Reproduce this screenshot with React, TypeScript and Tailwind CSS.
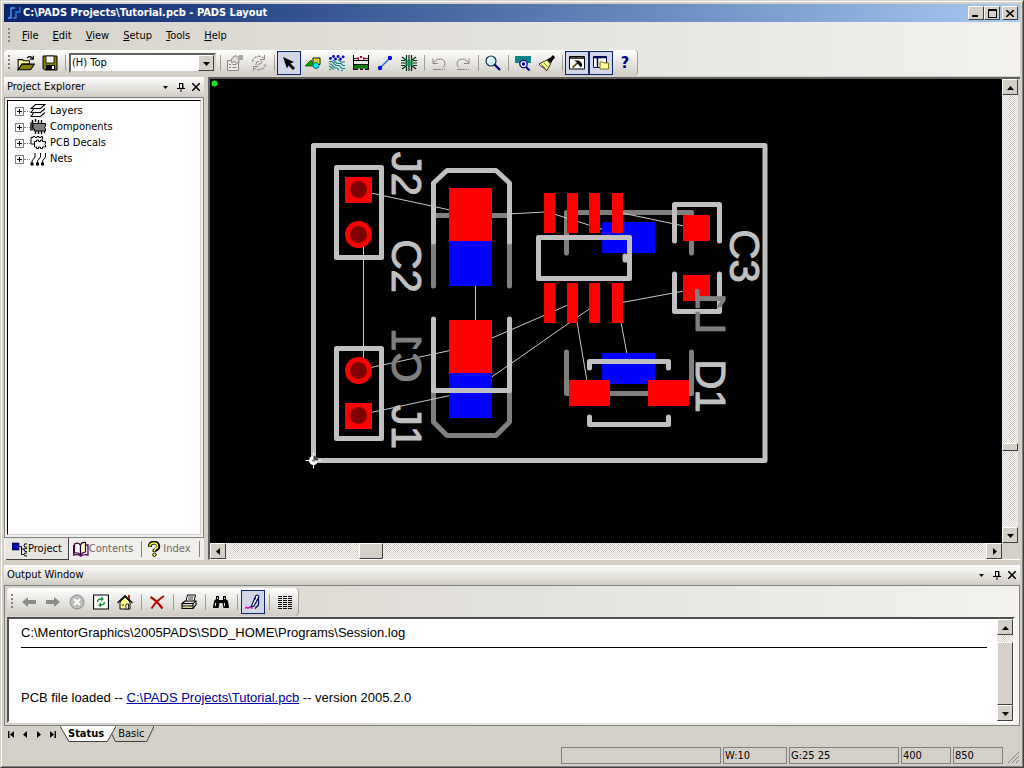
import { useState } from 'react';
import type { ReactNode } from 'react';

const raised = 'bg-[#d4d0c8] border border-t-white border-l-white border-r-[#404040] border-b-[#404040]';
const track = 'bg-[repeating-conic-gradient(#d4d0c8_0_25%,#fff_0_50%)] bg-[length:2px_2px]';
const strip = 'bg-linear-to-b from-white to-[#cfccc4]';

const Icon = ({ size = 16, children }: { size?: number; children: ReactNode }) => (
  <svg width={size} height={size} viewBox="0 0 16 16" fill="none" className="shrink-0" aria-hidden="true">
    {children}
  </svg>
);

const icons: Record<string, ReactNode> = {
  open: (
    <Icon size={18}>
      <path d="M1 14V5h4l1 1h5v3H4.500L1 14z" fill="#ffff9c" stroke="#000" strokeWidth="0.9" />
      <path d="M1 14l3.500-5H15.500L12 14z" fill="#848200" stroke="#000" strokeWidth="0.9" />
      <path d="M9 3.500q2.500-2.500 5 .5M14.500 1.500v3h-3" stroke="#000" />
    </Icon>
  ),
  save: (
    <Icon>
      <path d="M1 1h14v14H2.500L1 13.500z" fill="#848200" stroke="#000" />
      <path d="M4 1h8v7H4z" fill="#f4f4f4" stroke="#000" strokeWidth="0.8" />
      <path d="M4 10h9v5H4z" fill="#000" />
      <path d="M10 11h2v3h-2z" fill="#fff" />
    </Icon>
  ),
  props: (
    <Icon>
      <path d="M.5 5.500h11v10H.5z" fill="#eceae6" stroke="#8c8984" />
      <path d="M2 9.500h2M5.500 9.500h4M2 12.500h2M5.500 12.500h4" stroke="#8c8984" />
      <path d="M4 5l3-4h3l2 1.500V8H9L7 6.500 5 8z" fill="#dcdad4" stroke="#8c8984" />
      <path d="M12 0h4v5h-4z" fill="#a8a59f" />
    </Icon>
  ),
  cycle: (
    <Icon>
      <path d="M1.500 7a6.500 6 0 0 1 11-4M14.500 9a6.500 6 0 0 1-11 4" stroke="#9c9994" strokeWidth="1.400" strokeDasharray="3 1" />
      <path d="M13.500 0v4.500H9M2.500 16v-4.500H7M11 5.500l-1 3-3 1M5 10l.5-3 3-1" stroke="#8c8984" />
    </Icon>
  ),
  pointer: (
    <Icon>
      <path d="M2 2l11 5-3.500 1.500L14 13l-2 2-4.500-4.500L6 13.500z" fill="#000" />
    </Icon>
  ),
  draw: (
    <Icon>
      <path d="M8 3h7v6.500H8z" fill="#ffff00" stroke="#000" />
      <path d="M10 5h3v2h-3z" fill="#fff" stroke="#806000" strokeWidth="0.6" />
      <path d="M0 11l6-6 3 6z" fill="#00a000" stroke="#005000" strokeWidth="0.8" />
      <circle cx="11" cy="10.500" r="3" fill="#00dede" stroke="#006070" strokeWidth="0.8" />
    </Icon>
  ),
  route: (
    <Icon>
      <path
        d="M0 6.500h3l4 4h3l3 3h3M0 9h2l4 4h2l2 2M0 11.500h1.500l3 3M4 5l4 3.500h4l2 2h2M9 4.500L12 7h4M0 14.500h2M12 15.500h2"
        stroke="#108494"
        strokeWidth="1.200"
      />
      <g fill="#0000c0">
        <circle cx="1.500" cy="3.500" r="1.400" />
        <circle cx="4.500" cy="1.500" r="1.400" />
        <circle cx="6.500" cy="4" r="1.400" />
        <circle cx="9" cy="1.500" r="1.400" />
        <circle cx="11.500" cy="4" r="1.400" />
        <circle cx="14.200" cy="1.800" r="1.400" />
      </g>
    </Icon>
  ),
  section: (
    <Icon>
      <path d="M.5 0v15M15.500 0v15M0 5.500h16M0 9.500h16" stroke="#000" />
      <path d="M1 10h14v3.500H1z" fill="#008000" />
      <path d="M0 13.500h5V15H0zM7 13.500h3V15H7zM12 13.500h4V15h-4z" fill="#000" />
      <path d="M3 3.500l3-1.500v3zM13 3.500L10 2v3zM7 1h2v2H7z" fill="#b00020" />
      <path d="M1 3.500h3M12 3.500h3" stroke="#000" strokeWidth="0.8" />
    </Icon>
  ),
  trace: (
    <Icon>
      <path d="M3 13L13 3" stroke="#2060d0" strokeWidth="1.200" />
      <circle cx="3" cy="13" r="2.200" fill="#0000d0" />
      <circle cx="13" cy="3" r="2.200" fill="#0000d0" />
    </Icon>
  ),
  fanout: (
    <Icon>
      <path
        d="M5.500 0v16M8 0v16M10.500 0v16M0 5.500h4M12 5.500h4M0 8h4M12 8h4M0 10.500h4M12 10.500h4M1 2l4 3M15 2l-4 3M1 14l4-3M15 14l-4-3"
        stroke="#002818"
        strokeWidth="1.200"
      />
      <path d="M4 5h8v6H4z" fill="#40b070" />
      <path d="M5.500 4v8M8 4v8M10.500 4v8" stroke="#006030" />
    </Icon>
  ),
  undo: (
    <Icon>
      <path d="M2.500 7.500Q6 3 10 4t4 4-2 4.500M2 3.500v5h5" stroke="#8c8984" />
      <path d="M2 14.500h8M11 14.500h1M13 14.500h1" stroke="#8c8984" />
    </Icon>
  ),
  redo: (
    <Icon>
      <path d="M13.500 7.500Q10 3 6 4T2 8t2 4.500M14 3.500v5H9" stroke="#8c8984" />
      <path d="M2 14.500h8M11 14.500h1M13 14.500h1" stroke="#8c8984" />
    </Icon>
  ),
  zoom: (
    <Icon>
      <path d="M9.500 9.500L15 15" stroke="#000080" strokeWidth="2.400" />
      <circle cx="6" cy="6" r="5" fill="#d8f8ff" stroke="#103050" strokeWidth="1.200" />
      <path d="M3.500 6q0-2.500 2.500-2.500" stroke="#fff" strokeWidth="1.500" />
    </Icon>
  ),
  boardView: (
    <Icon>
      <path d="M0 1h16v7h-3l-2 4H6L4 8H0z" fill="#108484" />
      <path d="M10.500 11.500l4 4" stroke="#000080" strokeWidth="2" />
      <circle cx="8.500" cy="9" r="3.700" fill="#fff" stroke="#000080" strokeWidth="1.200" />
      <circle cx="8.500" cy="9" r="1.700" fill="#0000d0" />
    </Icon>
  ),
  brush: (
    <Icon>
      <path d="M0 9l8-4 3.500 4L8 15.500 5.500 14 4 12l-2-.5z" fill="#ffff9c" stroke="#000" strokeWidth="0.8" />
      <path d="M2.500 9.500l4 4M5 8l4 4.500" stroke="#848200" />
      <path d="M8 4.500l4 4 1.500-3L16 2.500 14 0l-2.500 2.500z" fill="#000" />
    </Icon>
  ),
  output: (
    <Icon>
      <path d="M.5 1.500h15v12.500H.5z" fill="#fff" stroke="#000" />
      <path d="M.5 3h15" stroke="#000" strokeWidth="1.500" />
      <path d="M3.500 12.500L9 7.500" stroke="#605020" strokeWidth="1.800" />
      <path d="M5 5.500h5l3 3v3l-1.500.5L9 9 7.500 7z" fill="#000" />
    </Icon>
  ),
  explorer: (
    <Icon>
      <path d="M.5 1.500h13v11H.5z" fill="#fff" stroke="#000050" />
      <path d="M.5 2.500h13M4.500 3v9" stroke="#000050" strokeWidth="1.500" />
      <path d="M7 14V7h3l1 1h4.500v6z" fill="#ffff9c" stroke="#807010" />
    </Icon>
  ),
  arrowLeft: (
    <Icon>
      <path d="M1 8l6-5v3h8v4H7v3z" fill="#8c8c8c" />
    </Icon>
  ),
  arrowRight: (
    <Icon>
      <path d="M15 8L9 3v3H1v4h8v3z" fill="#8c8c8c" />
    </Icon>
  ),
  stop: (
    <Icon>
      <circle cx="8" cy="8" r="7" fill="#bdbdbd" stroke="#8c8c8c" />
      <path d="M5 5l6 6M11 5l-6 6" stroke="#fff" strokeWidth="2" />
    </Icon>
  ),
  refresh: (
    <Icon>
      <path d="M.5 1h15v14H.5z" fill="#fff" stroke="#000" strokeWidth="1.200" />
      <path d="M4.500 8q0-3 4-3M11.500 8q0 3-4 3" stroke="#109030" strokeWidth="1.300" />
      <path d="M8 2.500L11 5 8 7.500zM8 8.500L5 11l3 2.500z" fill="#109030" />
    </Icon>
  ),
  home: (
    <Icon>
      <path d="M11 1h2v5h-2z" fill="#a03010" />
      <path d="M3 8l5-5 5 5v7H3z" fill="#ffff9c" stroke="#000" />
      <path d="M.5 9L8 1.500 15.500 9" stroke="#000" strokeWidth="1.200" />
      <path d="M9 10h2.500v5H9z" fill="#fff" stroke="#000" strokeWidth="0.8" />
      <path d="M4.500 10h2.500v2H4.500z" fill="#b0a020" />
    </Icon>
  ),
  remove: (
    <Icon>
      <path d="M1.500 3Q7 6 13.500 14.500" stroke="#b50000" strokeWidth="2.200" />
      <path d="M15 2Q7 7 2.500 14.500" stroke="#b50000" strokeWidth="1.800" />
    </Icon>
  ),
  print: (
    <Icon>
      <path d="M5 7l1.500-6h8L13 7" fill="#fff" stroke="#000" />
      <path d="M7.500 3h5M7 5h5" stroke="#000" strokeWidth="0.8" />
      <path d="M1 9.500L4 7h11v3.500l-3 4H1z" fill="#d8d8d0" stroke="#000" strokeWidth="1.200" />
      <path d="M1 9.500h11L15 7M12 9.500v5M1 12h11" stroke="#000" />
      <path d="M4 12.500h4v1H4z" fill="#d0d000" />
    </Icon>
  ),
  find: (
    <Icon>
      <path d="M0 14l1-7 2-2V2h3v4h4V2h3v3l2 2 1 7h-5.500L9.500 9h-3L5.500 14z" fill="#000" />
      <path d="M2.500 12V9M4.500 5V3.500M11.500 5V3.500M11.500 12V9" stroke="#fff" strokeWidth="0.9" />
    </Icon>
  ),
  pen: (
    <Icon>
      <path d="M6 13L11 1.500q2-1 3 1L9 12z" fill="#fff" stroke="#000050" strokeWidth="1.100" />
      <path d="M13.500 3v8L10 14.500M9 4l2 1" stroke="#000050" strokeWidth="1.200" />
      <path d="M0 14.500l1.500-1.500 1.500 1.500L4.500 13l3 1.500" stroke="#d000a0" strokeWidth="1.200" />
    </Icon>
  ),
  columns: (
    <Icon>
      <path
        d="M1 2.500h4M1 4.500h4M1 6.500h4M1 8.500h4M1 10.500h4M1 12.500h4M1 14.500h4M6 2.500h4M6 4.500h4M6 6.500h4M6 8.500h4M6 10.500h4M6 12.500h4M6 14.500h4M11 2.500h4M11 4.500h4M11 6.500h4M11 8.500h4M11 10.500h4M11 12.500h4M11 14.500h4"
        stroke="#000"
      />
    </Icon>
  ),
  layers: (
    <Icon>
      <path d="M5.500 1.500h9.500l-4.500 4H1zM3.500 6L1 9.500h9.500L15 5.500M3.500 10L1 13.500h9.500L15 9.500" stroke="#000" strokeWidth="1.100" />
    </Icon>
  ),
  components: (
    <Icon>
      <path d="M2.500 1v3M5.500 0v3M8.500 1v3M11.500 1v3M5.500 12v3M8.500 12v3M11.500 12v3M14.500 12v2M1 3.500v8" stroke="#000" strokeWidth="1.400" />
      <path d="M1 3.500h3v8H1z" fill="#404040" />
      <path d="M3 4.500h12.500v3q-2 .5 0 2v2.500H4.500V10L3 9z" fill="#808080" stroke="#000" />
    </Icon>
  ),
  decals: (
    <Icon>
      <path d="M4.500 11V9H1V2.500h2v-1h2v1h2v-1h2v1h2v-1h1.500v3" stroke="#000" />
      <path d="M4.500 6.500h2V5h2v1.500h2V5h2v1.500h3v2q-2 .5 0 1.500v2h-3v1.500h-2V12h-2v1.500h-2V12h-2z" fill="#fff" stroke="#000" />
    </Icon>
  ),
  nets: (
    <Icon>
      <path d="M2 13V10l3-4V2M7.500 13V10l3-4V2M12.500 13V10l3-4V2" stroke="#000" />
      <path d="M.5 11.500h3v3h-3zM6 11.500h3v3H6zM11 11.500h3v3h-3z" fill="#000" />
    </Icon>
  ),
  project: (
    <Icon>
      <path d="M0 2h7v7H0z" fill="#0000b5" stroke="#000" strokeWidth="0.6" />
      <path d="M7 5.500h2.500v8H12M9.500 8H12M15 3q-3-1-3 1.500T15 6M15 7.500q-3-.5-3 1.500t3 1.500M15 12q-3-.5-3 1.500t3 1.500" stroke="#000" />
    </Icon>
  ),
  book: (
    <Icon>
      <path d="M1.500 3Q5 1 7.500 4v10Q5 11 1.500 12z" fill="#fff" stroke="#300030" strokeWidth="1.200" />
      <path d="M7.500 14V4q1-3 5-2.500V11q-3 0-5 3z" fill="#ffffc0" stroke="#300030" strokeWidth="1.200" />
      <path d="M13 4h2v10q-5-1-7 1-3-2-7.500-1V4" stroke="#600060" strokeWidth="1.300" />
    </Icon>
  ),
  question: (
    <Icon>
      <path d="M4 6V4q1-2.500 4-2.500T12 4t-1 4L8.500 9.500V11" stroke="#000" strokeWidth="3.800" />
      <path d="M4 5.500V4q1-2 4-2t3.500 2.500T10 7.500L8.500 9v1.500" stroke="#ffff40" strokeWidth="1.600" />
      <circle cx="8.500" cy="13.700" r="1.700" fill="#ffff40" stroke="#000" />
    </Icon>
  ),
};

const Arrow = ({ dir }: { dir: 'up' | 'down' | 'left' | 'right' }) => {
  const d = { up: 'M0 6h7L3.500 2z', down: 'M0 2h7L3.500 6z', left: 'M5 0v7L1 3.500z', right: 'M2 0v7l4-3.500z' }[dir];
  return (
    <svg width="7" height="7" viewBox="0 0 7 7" aria-hidden="true">
      <path d={d} fill="#000" />
    </svg>
  );
};

const Grip = () => <span className="mx-1 h-4 w-0.5 shrink-0 bg-[repeating-linear-gradient(#86837c_0_2px,transparent_2px_4px)]" />;

const Sep = ({ wide = false }: { wide?: boolean }) => (
  <span className={wide ? 'mr-[3px] ml-1 h-4 w-px shrink-0 bg-[#a09d96]' : 'mr-0.5 ml-[3px] h-4 w-px shrink-0 bg-[#a09d96]'} />
);

const Tool = ({ name, label, on = false }: { name: string; label: string; on?: boolean }) => (
  <button
    aria-label={label}
    aria-pressed={on}
    className={
      on
        ? 'flex size-6 shrink-0 items-center justify-center border border-[#0a246a] bg-[#d2d6e6]'
        : 'flex size-6 shrink-0 items-center justify-center'
    }
  >
    {icons[name]}
  </button>
);

const ScrollButton = ({ dir }: { dir: 'up' | 'down' | 'left' | 'right' }) => (
  <button aria-label={'Scroll ' + dir} className={'flex size-4 shrink-0 items-center justify-center ' + raised}>
    <Arrow dir={dir} />
  </button>
);

const PaneHeader = ({ title }: { title: string }) => (
  <header className={'flex h-5 shrink-0 items-center pr-px pl-[3px] ' + strip}>
    <h2 className="flex-1">{title}</h2>
    <button aria-label="Menu" className="flex h-4 w-[15px] items-center justify-center">
      <svg width="5" height="3"><path d="M0 0h5L2.500 3z" /></svg>
    </button>
    <button aria-label="Auto hide" className="flex h-4 w-[15px] items-center justify-center">
      <svg width="8" height="9" fill="none" stroke="#000"><path d="M2 .5h4v5M2.500 0v6M0 5.500h8M4 5v4M5.500 0v5" /></svg>
    </button>
    <button aria-label="Close" className="flex h-4 w-[15px] items-center justify-center">
      <svg width="8" height="8" stroke="#000" strokeWidth="1.500"><path d="M0 0l8 8M8 0L0 8" /></svg>
    </button>
  </header>
);

const menus = ['File', 'Edit', 'View', 'Setup', 'Tools', 'Help'];

const tree = [
  { name: 'Layers', icon: 'layers' },
  { name: 'Components', icon: 'components' },
  { name: 'PCB Decals', icon: 'decals' },
  { name: 'Nets', icon: 'nets' },
];

// [label, x of the baseline, y of the middle, colour, seen from the bottom side]
const designators: [string, number, number, string, boolean][] = [
  ['J2', 392, 174, '#c0c0c0', false],
  ['C2', 392, 266, '#c0c0c0', false],
  ['J1', 392, 427, '#c0c0c0', false],
  ['C3', 730, 256, '#c0c0c0', false],
  ['D1', 696, 386, '#c0c0c0', false],
  ['C1', 392, 356, '#808080', true],
  ['L1', 696, 311, '#808080', true],
];

const Board = () => (
  <svg className="min-w-0 flex-1 bg-black" role="img" aria-label="Board layout">
    <g transform="translate(-210 -79)" fill="none" strokeWidth="5" strokeLinecap="round" strokeLinejoin="round">
      <circle cx="214.500" cy="83.500" r="3" fill="#20e020" />
      {/* bottom side silk */}
      <g stroke="#808080">
        <path d="M435 215.500H508M433.500 243V286M509.500 243V286" />
        <path d="M433.500 392V422L447 435.500H496L509.500 422V392" />
        <path d="M566.500 253V212.500H691.500V253M566.500 352V393.500H691.500V352" />
      </g>
      {/* ratsnest */}
      <path
        d="M363.500 245V360M475.500 285V321M371 193L450 210M508 214L545 212M371 367.500L450 350.500M371 412.500L450 395.500M491 338.500L568 305M491 377.500L592 307M554 214L603 229.500M622 213L684 226M622 302.500L684 291M577 322L587 381M621 322L627 354"
        stroke="#c8c8c8"
        strokeWidth="1"
      />
      <g fill="#0000ff">
        <path d="M449 241h43v45h-43zM449 373h43v45h-43zM602 222h53v31h-53zM602 353h53v31h-53z" />
      </g>
      <g fill="#ff0000">
        <path d="M345 177h27v26h-27zM345 403h27v26h-27zM449 188h43v53h-43zM449 320h43v53h-43z" />
        <path d="M544 193h11v40h-11zM567 193h11v40h-11zM589 193h11v40h-11zM612 193h11v40h-11z" />
        <path d="M544 283h11v40h-11zM567 283h11v40h-11zM589 283h11v40h-11zM612 283h11v40h-11z" />
        <path d="M683 215h27v26h-27zM683 275h27v26h-27zM569 380h41v26h-41zM648 380h41v26h-41z" />
        <circle cx="358.500" cy="234.500" r="13.500" />
        <circle cx="358.500" cy="370.500" r="13.500" />
      </g>
      <g fill="#800000">
        <circle cx="358.500" cy="189.500" r="8.500" />
        <circle cx="358.500" cy="234.500" r="8.500" />
        <circle cx="358.500" cy="370.500" r="8.500" />
        <circle cx="358.500" cy="415.500" r="8.500" />
      </g>
      {/* top side silk and board edge */}
      <g stroke="#c0c0c0">
        <path d="M313.500 145.500H765V460.500H313.500z" />
        <path d="M336.500 167.500h45v90h-45zM336.500 348.500h45v90h-45z" />
        <path d="M433.500 242V183L447 170.500H496L509.500 183V242M433.500 319V390.500H509.500V319" />
        <path d="M538.500 237.500H629.500V278.500H538.500zM625 256v4h4" />
        <path d="M674.500 241V204.500H719.500V241M674.500 274V311.500H719.500V274" />
        <path d="M589.500 368V361.500H668.500V368M589.500 417V424.500H668.500V417" />
      </g>
      {designators.map(([label, x, y, color, mirrored]) => (
        <text
          key={label}
          transform={`translate(${x} ${y}) rotate(90)${mirrored ? ' scale(-1 1)' : ''}`}
          fill={color}
          stroke={color}
          strokeWidth="1"
          fontSize="42"
          textAnchor="middle"
          fontFamily="'Liberation Sans', Arial, sans-serif"
        >
          {label}
        </text>
      ))}
      {/* origin */}
      <circle cx="313.500" cy="460.500" r="4.500" fill="#fff" />
      <path d="M313.500 453v15M306 460.500h15" stroke="#fff" strokeWidth="1" />
      <path d="M313.500 455.500v5h5q-1-4-5-5z" fill="#404040" />
      <circle cx="313.500" cy="460.500" r="1.500" fill="#909090" />
    </g>
  </svg>
);

const App = () => {
  const [layer, setLayer] = useState('(H) Top');
  const [sheet, setSheet] = useState('Status');

  return (
    <div className="flex min-h-screen flex-col border border-t-[#d4d0c8] border-l-[#d4d0c8] border-r-[#404040] border-b-[#404040] bg-[#d4d0c8] font-['DejaVu_Sans_Condensed','DejaVu_Sans',sans-serif] text-[11px] leading-4 text-black">
      <div className="flex flex-1 flex-col border border-t-white border-l-white border-r-[#808080] border-b-[#808080] p-0.5">
        <div className="flex h-[18px] shrink-0 items-center gap-px bg-linear-to-r from-[#0a246a] to-[#a6caf0] px-0.5 text-white">
          <svg width="16" height="16" fill="none" strokeWidth="1.300" aria-hidden="true">
            <path d="M2 13h3V3h4" stroke="#5aa0ff" />
            <path d="M7 13h3V7h4V2" stroke="#3080e0" />
          </svg>
          <h1 className="flex-1 font-bold">C:\PADS Projects\Tutorial.pcb - PADS Layout</h1>
          <div className="flex">
            <button aria-label="Minimize" className={'flex h-3.5 w-4 items-end justify-center pb-0.5 ' + raised}>
              <span className="mr-0.5 h-0.5 w-1.5 bg-black" />
            </button>
            <button aria-label="Maximize" className={'mr-0.5 flex h-3.5 w-4 items-center justify-center ' + raised}>
              <span className="h-[9px] w-[9px] border border-t-2 border-black" />
            </button>
            <button aria-label="Close" className={'flex h-3.5 w-4 items-center justify-center ' + raised}>
              <svg width="8" height="7" stroke="#000" strokeWidth="1.600"><path d="M0 0l8 7M8 0L0 7" /></svg>
            </button>
          </div>
        </div>

        <div className="shrink-0 bg-linear-to-r from-[#d6d3cb] to-[#f2f1ee]">
          <nav className="flex h-7 items-center">
            <Grip />
            <div className="flex gap-3.5 pl-2">
              {menus.map((m) => (
                <button key={m}>
                  <u>{m[0]}</u>
                  {m.slice(1)}
                </button>
              ))}
            </div>
          </nav>

          <div className="flex">
            <div className={'flex h-[26px] items-center rounded-sm border-r border-[#a09d96] ' + strip}>
              <Grip />
              <Tool name="open" label="Open" />
              <Tool name="save" label="Save" />
              <Sep />
              <div className="relative mx-px">
                <select
                  aria-label="Layer"
                  value={layer}
                  onChange={(e) => setLayer(e.target.value)}
                  className="block h-5 w-[147px] appearance-none border-2 border-t-[#606060] border-r-[#d4d0c8] border-b-[#d4d0c8] border-l-[#606060] bg-white pl-px"
                >
                  <option>(H) Top</option>
                  <option>Bottom</option>
                </select>
                <span className={'pointer-events-none absolute top-0.5 right-0.5 flex h-4 w-4 items-center justify-center ' + raised}>
                  <Arrow dir="down" />
                </span>
              </div>
              <Sep />
              <Tool name="props" label="Properties" />
              <Tool name="cycle" label="Cycle" />
              <Sep />
              <Tool name="pointer" label="Select" on />
              <Tool name="draw" label="Drafting" />
              <Tool name="route" label="Design" />
              <Tool name="section" label="Dimensioning" />
              <Tool name="trace" label="Route" />
              <Tool name="fanout" label="ECO" />
              <Sep />
              <Tool name="undo" label="Undo" />
              <Tool name="redo" label="Redo" />
              <Sep />
              <Tool name="zoom" label="Zoom" />
              <Sep />
              <Tool name="boardView" label="Board" />
              <Tool name="brush" label="Redraw" />
              <Sep />
              <Tool name="output" label="Output window" on />
              <Tool name="explorer" label="Project explorer" on />
              <button aria-label="Help" className="size-6 text-base font-bold text-[#000080]">
                ?
              </button>
            </div>
          </div>
        </div>

        <main className="flex flex-1 pt-px pb-[5px]">
          <aside className="flex w-[200px] shrink-0 flex-col">
            <PaneHeader title="Project Explorer" />
            <div className="flex flex-1 flex-col border border-[#808080] bg-[#f0efec] p-0.5">
              <ul className="flex-1 border border-t-black border-l-black border-r-[#d4d0c8] border-b-[#d4d0c8] bg-white pt-0.5">
                {tree.map(({ name, icon }) => (
                  <li key={name} className="flex h-4 items-center pl-[7px]">
                    <button aria-label={'Expand ' + name} className="flex size-[9px] items-center justify-center border border-[#808080]">
                      <svg width="5" height="5" stroke="#000"><path d="M0 2.500h5M2.500 0v5" /></svg>
                    </button>
                    <span className="w-1.5 border-t border-dotted border-[#808080]" />
                    {icons[icon]}
                    <span className="pl-1">{name}</span>
                  </li>
                ))}
              </ul>
            </div>
            <div role="tablist" className="flex h-[22px] shrink-0 items-center bg-[#f0efec] pl-0.5 text-[#6d6a64]">
              <button role="tab" aria-selected="true" className="flex h-full items-center border-r border-b border-[#404040] bg-[#e8e6e2] px-1.5 text-black">
                {icons.project}
                Project
              </button>
              <button role="tab" aria-selected="false" className="flex items-center border-r border-[#808080] pl-1 pr-2">
                {icons.book}
                Contents
              </button>
              <button role="tab" aria-selected="false" className="flex items-center gap-px border-r border-[#808080] pl-1 pr-2">
                {icons.question}
                Index
              </button>
            </div>
          </aside>

          <section className="ml-1 flex min-w-0 flex-1 flex-col border-t-2 border-b border-l-2 border-t-[#606060] border-b-white border-l-[#606060]">
            <div className="flex flex-1">
              <Board />
              <div className={'flex w-4 shrink-0 flex-col ' + track}>
                <ScrollButton dir="up" />
                <span className="flex-[348]" />
                <span className={'h-2 ' + raised} />
                <span className="flex-[76]" />
                <ScrollButton dir="down" />
              </div>
              <span className="w-0.5" />
            </div>
            <div className="flex h-4 shrink-0">
              <div className={'flex flex-1 ' + track}>
                <ScrollButton dir="left" />
                <span className="flex-[133]" />
                <span className={'w-6 ' + raised} />
                <span className="flex-[604]" />
                <ScrollButton dir="right" />
              </div>
              <span className="w-[18px]" />
            </div>
          </section>
        </main>

        <section className="flex shrink-0 flex-col">
          <PaneHeader title="Output Window" />
          <div className="border border-[#808080] bg-linear-to-r from-[#d6d3cb] to-[#f2f1ee] pt-0.5 pr-1 pb-0.5 pl-0.5">
            <div className="flex">
              <div className={'flex h-7 items-center rounded-sm border-r border-[#a09d96] pr-px ' + strip}>
                <Grip />
                <Tool name="arrowLeft" label="Back" />
                <Tool name="arrowRight" label="Forward" />
                <Tool name="stop" label="Stop" />
                <Tool name="refresh" label="Refresh" />
                <Tool name="home" label="Home" />
                <Sep wide />
                <Tool name="remove" label="Clear" />
                <Sep wide />
                <Tool name="print" label="Print" />
                <Sep wide />
                <Tool name="find" label="Find" />
                <Sep wide />
                <Tool name="pen" label="Log" on />
                <Sep wide />
                <Tool name="columns" label="Columns" />
              </div>
            </div>
            <div className="mt-px flex border-2 border-t-[#505050] border-l-[#505050] border-r-white border-b-white bg-white">
              <div className="h-[102px] flex-1 pt-1.5 pr-2.5 pl-3 font-['Liberation_Sans',Arial,sans-serif] text-[13px]">
                <p className="border-b border-black pb-1.5">C:\MentorGraphics\2005PADS\SDD_HOME\Programs\Session.log</p>
                <p className="pt-[42px]">
                  PCB file loaded --{' '}
                  <a href="#tutorial" className="text-[#0000a0] underline">
                    C:\PADS Projects\Tutorial.pcb
                  </a>{' '}
                  -- version 2005.2.0
                </p>
              </div>
              <div className={'flex w-4 shrink-0 flex-col ' + track}>
                <ScrollButton dir="up" />
                <span className="flex-[7]" />
                <span className={'flex-[63] ' + raised} />
                <ScrollButton dir="down" />
              </div>
            </div>
          </div>
          <div className="flex h-4 items-center pl-1">
            <div className="mr-1 flex w-12 justify-between">
              <button aria-label="First"><svg width="7" height="7"><path d="M0 0h1.500v7H0zM6 0v7L2 3.500z" /></svg></button>
              <button aria-label="Previous"><Arrow dir="left" /></button>
              <button aria-label="Next"><Arrow dir="right" /></button>
              <button aria-label="Last"><svg width="7" height="7"><path d="M5.500 0H7v7H5.500zM1 0v7l4-3.500z" /></svg></button>
            </div>
            {['Status', 'Basic'].map((s) => (
              <button
                key={s}
                onClick={() => setSheet(s)}
                className={s === sheet ? 'relative z-10 h-4 pr-3 pl-2 font-bold' : 'relative -ml-2 h-4 px-2.5'}
              >
                <svg className="absolute inset-0 size-full" viewBox="0 0 50 16" preserveAspectRatio="none" stroke="#404040">
                  <path d="M0 0L8 15.500H42L50 0" fill={s === sheet ? '#fff' : '#d4d0c8'} vectorEffect="non-scaling-stroke" />
                </svg>
                <span className="relative">{s}</span>
              </button>
            ))}
          </div>
        </section>

        <footer className="flex h-[22px] shrink-0 items-end justify-end gap-0.5">
          <output className="h-[17px] w-40 border border-[#808080]" />
          <output className="h-[17px] w-16 border border-[#808080] pl-px">W:10</output>
          <output className="h-[17px] w-[110px] border border-[#808080] pl-px">G:25 25</output>
          <output className="h-[17px] w-[50px] border border-[#808080] pl-px">400</output>
          <output className="h-[17px] w-[50px] border border-[#808080] pl-px">850</output>
          <svg width="15" height="14" stroke="#808080" aria-hidden="true"><path d="M3 13L14 2M7 13l7-7M11 13l3-3" /></svg>
        </footer>
      </div>
    </div>
  );
};

export default App;
